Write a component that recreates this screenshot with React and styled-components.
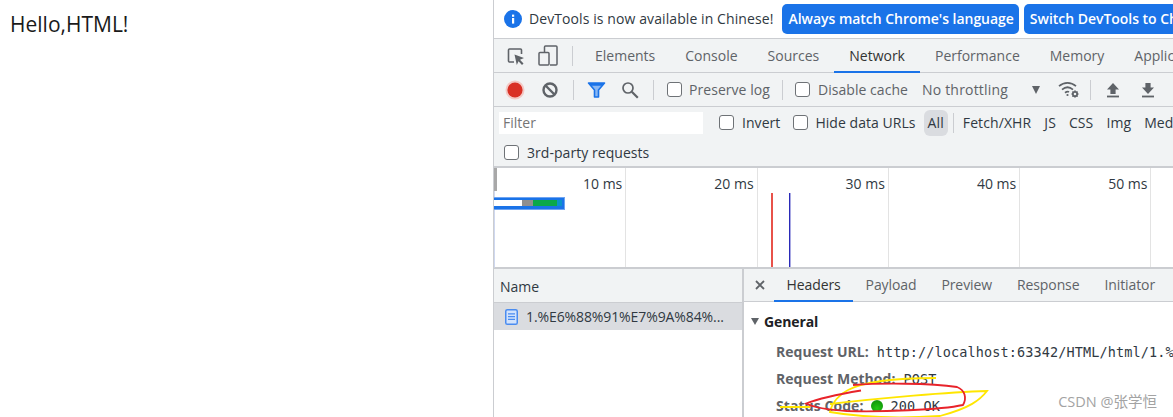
import React from "react";
import styled, { createGlobalStyle } from "styled-components";

const GlobalStyle = createGlobalStyle`
  html, body {
    margin: 0;
    padding: 0;
    background: #fff;
    overflow: hidden;
  }
  * {
    box-sizing: border-box;
  }
`;

const Page = styled.div`
  position: relative;
  display: flex;
  width: 1173px;
  height: 417px;
  overflow: hidden;
  font-family: "Open Sans", "Noto Sans", sans-serif;
`;

const Viewport = styled.div`
  width: 493px;
  flex: none;
  padding: 11px 10px;
  font-size: 21px;
  line-height: 26px;
  color: #1a1a1a;
`;

const Devtools = styled.div`
  width: 680px;
  flex: none;
  display: flex;
  flex-direction: column;
  border-left: 1px solid #cbcdd1;
  background: #f1f3f4;
  color: #5f6368;
  font-size: 14px;
  overflow: hidden;
  white-space: nowrap;
`;

const InfoBar = styled.div`
  height: 39px;
  flex: none;
  display: flex;
  align-items: center;
  gap: 5px;
  padding: 0 0 1px 10px;
  background: #fff;
  border-bottom: 1px solid #cbcdd1;
  color: #303942;
  font-size: 14px;

  svg {
    flex: none;
  }
`;

const InfoText = styled.span`
  flex: none;
  margin: 0 4px 0 2px;
  letter-spacing: 0.09px;
`;

const BlueButton = styled.div`
  height: 30px;
  flex: none;
  display: flex;
  align-items: center;
  padding: 0 5px 0 6px;
  border-radius: 5px;
  background: #1a73e8;
  color: #fff;
  font-size: 14px;
  font-weight: 600;
  letter-spacing: -0.03px;
`;

const TabsRow = styled.div`
  height: 34px;
  flex: none;
  display: flex;
  align-items: stretch;
  padding-left: 12px;
  border-bottom: 1px solid #cbcdd1;
`;

const IconSlot = styled.div`
  width: ${(p) => p.$w || 26}px;
  flex: none;
  display: flex;
  align-items: center;
  justify-content: center;
  margin-left: ${(p) => p.$ml || 0}px;
`;

const Divider = styled.div`
  width: 1px;
  height: ${(p) => p.$h || 20}px;
  flex: none;
  align-self: center;
  margin: ${(p) => p.$m || "0 7px"};
  background: #cbcdd1;
`;

const Tab = styled.div`
  display: flex;
  align-items: center;
  flex: none;
  padding: 0 15px;
  margin-bottom: -1px;
  color: ${(p) => (p.$active ? "#333" : "#5f6368")};
  border-bottom: 2px solid ${(p) => (p.$active ? "#1a73e8" : "transparent")};
`;

const Toolbar = styled.div`
  height: 34px;
  flex: none;
  display: flex;
  align-items: center;
  padding-left: 8px;
  border-bottom: 1px solid #cbcdd1;
`;

const CheckLabel = styled.label`
  display: flex;
  align-items: center;
  flex: none;
  gap: ${(p) => p.$gap || 7}px;
  margin: ${(p) => p.$m || 0};
  color: ${(p) => p.$color || "#5f6368"};
  letter-spacing: 0.05px;
`;

const Box = styled.span`
  width: 15px;
  height: 15px;
  flex: none;
  background: #fff;
  border: 1px solid #6e7276;
  border-radius: 3px;
`;

const Throttle = styled.div`
  width: 130px;
  flex: none;
  display: flex;
  align-items: center;
  justify-content: space-between;
  margin-left: 14px;
  padding-right: 12px;
  letter-spacing: 0.2px;
`;

const Arrow = styled.span`
  width: 0;
  height: 0;
  border-left: 4.5px solid transparent;
  border-right: 4.5px solid transparent;
  border-top: 8px solid #5f6368;
`;

const FilterPanel = styled.div`
  height: 61px;
  flex: none;
  display: flex;
  flex-direction: column;
  border-bottom: 2px solid #cbcdd1;
`;

const FilterRow = styled.div`
  height: ${(p) => p.$h}px;
  display: flex;
  align-items: center;
  padding-left: ${(p) => p.$pad}px;
`;

const FilterInput = styled.div`
  width: 204px;
  height: 22px;
  flex: none;
  padding-left: 4px;
  background: #fff;
  color: #757575;
  line-height: 22px;
  margin-right: 16px;
`;

const TypeFilter = styled.div`
  flex: none;
  padding: 0 4px;
  margin-right: ${(p) => p.$mr ?? 5}px;
  height: 26px;
  line-height: 26px;
  border-radius: 6px;
  color: #303942;
  letter-spacing: 0.1px;
  background: ${(p) => (p.$active ? "#dadce0" : "transparent")};
`;

const Overview = styled.div`
  position: relative;
  height: 100px;
  flex: none;
  display: flex;
  background: #fff;
  border-left: 1px solid #cfd8f0;
  border-bottom: 1px solid #cbcdd1;
`;

const RulerCell = styled.div`
  width: 131.3px;
  flex: none;
  padding: 6px 3px 0 0;
  text-align: right;
  color: #303942;
  border-right: 1px solid #e3e3e3;
`;

const ChartMarks = styled.svg`
  position: absolute;
  left: -1px;
  top: 0;
`;

const Split = styled.div`
  flex: 1;
  display: flex;
  min-height: 0;
  border-top: 1px solid #cbcdd1;
  background: #fff;
`;

const NamePane = styled.div`
  width: 250px;
  flex: none;
  border-right: 2px solid #cbcdd1;
`;

const NameHeader = styled.div`
  height: 34px;
  padding-left: 6px;
  line-height: 35px;
  background: #f1f3f4;
  color: #303942;
  border-bottom: 1px solid #cbcdd1;
`;

const NameRow = styled.div`
  height: 27px;
  display: flex;
  align-items: center;
  gap: 8px;
  padding-left: 11px;
  background: #dadce0;
  color: #303942;
  letter-spacing: -0.1px;
`;

const DetailPane = styled.div`
  flex: 1;
  min-width: 0;
  display: flex;
  flex-direction: column;
`;

const DetailTabs = styled.div`
  height: 33px;
  flex: none;
  display: flex;
  align-items: stretch;
  background: #f1f3f4;
  border-bottom: 1px solid #cbcdd1;
`;

const CloseSlot = styled.div`
  width: 30px;
  flex: none;
  display: flex;
  align-items: center;
  justify-content: center;
  padding-left: 2px;
`;

const DetailTab = styled(Tab)`
  padding: 0 12.5px;
  letter-spacing: -0.1px;
`;

const Section = styled.div`
  padding: 8px 0 0 7px;
  background: #fff;
`;

const SectionTitle = styled.div`
  display: flex;
  align-items: center;
  gap: 5px;
  height: 22px;
  font-weight: 700;
  color: #202124;
  letter-spacing: -0.1px;
  margin-bottom: 6px;
`;

const TitleArrow = styled.span`
  width: 0;
  height: 0;
  border-left: 4.5px solid transparent;
  border-right: 4.5px solid transparent;
  border-top: 7px solid #5f6368;
`;

const HeaderRow = styled.div`
  display: flex;
  align-items: center;
  height: 27px;
  padding-left: 25px;
`;

const HeaderKey = styled.span`
  flex: none;
  font-weight: 700;
  color: #5f6368;
  letter-spacing: 0.05px;
  margin-right: 8px;
`;

const HeaderValue = styled.span`
  font-family: "DejaVu Sans Mono", "Liberation Mono", monospace;
  font-size: 13.5px;
  letter-spacing: 0.12px;
  color: #303942;
`;

const StatusDot = styled.span`
  width: 12px;
  height: 12px;
  flex: none;
  margin-right: 7px;
  border-radius: 50%;
  background: radial-gradient(circle at 50% 70%, #23c814 0%, #129a0a 70%, #5f8f55 100%);
`;

const Scribbles = styled.svg`
  position: absolute;
  left: 780px;
  top: 340px;
  pointer-events: none;
`;

const Watermark = styled.div`
  position: absolute;
  right: 16px;
  bottom: 6px;
  font-family: "Open Sans", "Noto Sans CJK SC", sans-serif;
  font-size: 14.5px;
  color: #a3a3a3;
`;

const InspectIcon = () => (
  <svg width="20" height="20" viewBox="0 0 20 20" fill="none">
    <path d="M8 16H3.5a1 1 0 0 1-1-1V4a1 1 0 0 1 1-1h11a1 1 0 0 1 1 1v4" stroke="#5f6368" strokeWidth="1.6" />
    <path d="M8.5 8.5l9.5 3.6-4 1.7 3.5 3.7-1.5 1.4-3.5-3.7-1.7 3.8z" fill="#5f6368" />
  </svg>
);

const DeviceIcon = () => (
  <svg width="20" height="22" viewBox="0 0 20 22" fill="none" stroke="#5f6368" strokeWidth="1.5">
    <path d="M6.5 7V2a1 1 0 0 1 1-1h10.5a1 1 0 0 1 1 1v17a1 1 0 0 1-1 1h-6" />
    <rect x="1" y="7.5" width="10" height="12.5" rx="1" />
  </svg>
);

const InfoIcon = () => (
  <svg width="18" height="18" viewBox="0 0 18 18">
    <circle cx="9" cy="9" r="9" fill="#1a73e8" />
    <rect x="8" y="8" width="2.2" height="5.6" fill="#fff" />
    <rect x="8" y="4.6" width="2.2" height="2.2" fill="#fff" />
  </svg>
);

const RecordIcon = () => (
  <svg width="20" height="20" viewBox="0 0 20 20">
    <circle cx="10" cy="10" r="9.5" fill="#f3c9c5" />
    <circle cx="10" cy="10" r="7.6" fill="#d93025" />
  </svg>
);

const ClearIcon = () => (
  <svg width="18" height="18" viewBox="0 0 18 18" fill="none" stroke="#5f6368" strokeWidth="2.4">
    <circle cx="9" cy="9" r="6.5" />
    <path d="M4.5 4.5l9 9" />
  </svg>
);

const FunnelIcon = () => (
  <svg width="19" height="16" viewBox="0 0 18 16">
    <path d="M1 1h16l-6 7v7H7V8z" fill="#8ab8f4" stroke="#1a73e8" strokeWidth="1.6" strokeLinejoin="round" />
    <path d="M1 1h16l-2.4 2.8H3.4z" fill="#1a73e8" />
  </svg>
);

const SearchIcon = () => (
  <svg width="18" height="18" viewBox="0 0 18 18" fill="none" stroke="#5f6368">
    <circle cx="7" cy="7" r="5" strokeWidth="1.7" />
    <path d="M10.8 10.8l6 6" strokeWidth="2.2" />
  </svg>
);

const WifiGearIcon = () => (
  <svg width="22" height="16" viewBox="0 0 22 16" fill="none" stroke="#5f6368" strokeWidth="1.7">
    <path d="M1 4.2C6 -0.2 13 -0.2 18 4.2" />
    <path d="M4 7.6C7.5 4.6 11.5 4.6 15 7.6" />
    <path d="M7 10.8C8.6 9.6 10.4 9.6 11 10" />
    <circle cx="9.5" cy="13" r="1.1" fill="#5f6368" stroke="none" />
    <circle cx="17" cy="12" r="2.2" strokeWidth="1.8" />
    <path d="M17 8.3v1.2M17 14.5v1.2M13.3 12h1.2M19.5 12h1.2M14.5 9.5l.8.8M18.8 13.8l.8.8M19.5 9.5l-.8.8M15.2 13.8l-.8.8" strokeWidth="1.2" />
  </svg>
);

const UploadIcon = () => (
  <svg width="14" height="16" viewBox="0 0 14 16" fill="#5f6368">
    <path d="M7 1l6 6.5H9.6V12H4.4V7.5H1z" />
    <rect x="1" y="13.6" width="12" height="1.8" />
  </svg>
);

const DownloadIcon = () => (
  <svg width="14" height="16" viewBox="0 0 14 16" fill="#5f6368">
    <path d="M7 12L1 5.5h3.4V1h5.2v4.5H13z" />
    <rect x="1" y="13.6" width="12" height="1.8" />
  </svg>
);

const DocIcon = () => (
  <svg width="13" height="16" viewBox="0 0 13 16" fill="none">
    <rect x="0.75" y="0.75" width="11.5" height="14.5" rx="1.6" fill="#d2e3fc" stroke="#4a8cf0" strokeWidth="1.5" />
    <path d="M3 4.8h7M3 7.6h7M3 10.4h7" stroke="#4a8cf0" strokeWidth="1.3" />
  </svg>
);

const CloseIcon = () => (
  <svg width="10" height="10" viewBox="0 0 10 10" stroke="#5f6368" strokeWidth="1.8">
    <path d="M1 1l8 8M9 1l-8 8" />
  </svg>
);

const mainTabs = ["Elements", "Console", "Sources", "Network", "Performance", "Memory", "Application"];
const detailTabs = ["Headers", "Payload", "Preview", "Response", "Initiator"];
const typeFilters = ["Fetch/XHR", "JS", "CSS", "Img", "Media"];
const rulerTicks = ["10 ms", "20 ms", "30 ms", "40 ms", "50 ms", "60 ms"];

export default function App() {
  return (
    <Page>
      <GlobalStyle />
      <Viewport>Hello,HTML!</Viewport>
      <Devtools>
        <InfoBar>
          <InfoIcon />
          <InfoText>DevTools is now available in Chinese!</InfoText>
          <BlueButton>Always match Chrome's language</BlueButton>
          <BlueButton>Switch DevTools to Chinese</BlueButton>
        </InfoBar>

        <TabsRow>
          <IconSlot $w={20}><InspectIcon /></IconSlot>
          <IconSlot $w={44}><DeviceIcon /></IconSlot>
          <Divider $m="0 7px 0 2px" />
          {mainTabs.map((t) => (
            <Tab key={t} $active={t === "Network"}>{t}</Tab>
          ))}
        </TabsRow>

        <Toolbar>
          <IconSlot $w={26}><RecordIcon /></IconSlot>
          <IconSlot $w={43}><ClearIcon /></IconSlot>
          <Divider $m="0 9px 0 2px" />
          <IconSlot $w={26}><FunnelIcon /></IconSlot>
          <IconSlot $w={42}><SearchIcon /></IconSlot>
          <Divider $m="0 13px 0 2px" />
          <CheckLabel>
            <Box />
            Preserve log
          </CheckLabel>
          <Divider $m="0 12px" />
          <CheckLabel $gap={8}>
            <Box />
            Disable cache
          </CheckLabel>
          <Throttle>
            No throttling
            <Arrow />
          </Throttle>
          <IconSlot $w={34}><WifiGearIcon /></IconSlot>
          <Divider $m="0 14px 0 4px" />
          <IconSlot $w={16}><UploadIcon /></IconSlot>
          <IconSlot $w={16} $ml={19}><DownloadIcon /></IconSlot>
        </Toolbar>

        <FilterPanel>
          <FilterRow $h={31} $pad={5}>
            <FilterInput>Filter</FilterInput>
            <CheckLabel $color="#303942" $gap={8} $m="0 13px 0 0">
              <Box />
              Invert
            </CheckLabel>
            <CheckLabel $color="#303942" $m="0 8px 0 0">
              <Box />
              Hide data URLs
            </CheckLabel>
            <TypeFilter $active $mr={3}>All</TypeFilter>
            <Divider $m="0 5px 0 2px" />
            {typeFilters.map((t) => (
              <TypeFilter key={t}>{t}</TypeFilter>
            ))}
          </FilterRow>
          <FilterRow $h={28} $pad={10}>
            <CheckLabel $color="#303942" $gap={8}>
              <Box />
              3rd-party requests
            </CheckLabel>
          </FilterRow>
        </FilterPanel>

        <Overview>
          {rulerTicks.map((t) => (
            <RulerCell key={t}>{t}</RulerCell>
          ))}
          <ChartMarks width="300" height="99" viewBox="0 0 300 99">
            <rect x="0" y="0" width="3" height="23" fill="#a8a8a8" />
            <rect x="0" y="29" width="71" height="13" fill="#6ea4f2" />
            <rect x="0" y="30" width="70" height="11" fill="#1a73e8" />
            <rect x="0" y="32" width="28" height="6" fill="#fff" />
            <rect x="28" y="32" width="11" height="6" fill="#8f8f8f" />
            <rect x="39" y="32" width="24" height="6" fill="#0ba84a" />
            <rect x="63" y="32" width="5" height="6" fill="#0a93c9" />
            <rect x="277" y="25" width="2" height="74" fill="#e8524a" />
            <rect x="295" y="25" width="1.4" height="74" fill="#2a2ab8" />
          </ChartMarks>
        </Overview>

        <Split>
          <NamePane>
            <NameHeader>Name</NameHeader>
            <NameRow>
              <DocIcon />
              1.%E6%88%91%E7%9A%84%...
            </NameRow>
          </NamePane>
          <DetailPane>
            <DetailTabs>
              <CloseSlot><CloseIcon /></CloseSlot>
              {detailTabs.map((t) => (
                <DetailTab key={t} $active={t === "Headers"}>{t}</DetailTab>
              ))}
            </DetailTabs>
            <Section>
              <SectionTitle>
                <TitleArrow />
                General
              </SectionTitle>
              <HeaderRow>
                <HeaderKey>Request URL:</HeaderKey>
                <HeaderValue>http://localhost:63342/HTML/html/1.%E6%88%91</HeaderValue>
              </HeaderRow>
              <HeaderRow>
                <HeaderKey>Request Method:</HeaderKey>
                <HeaderValue>POST</HeaderValue>
              </HeaderRow>
              <HeaderRow>
                <HeaderKey>Status Code:</HeaderKey>
                <StatusDot />
                <HeaderValue>200 OK</HeaderValue>
              </HeaderRow>
            </Section>
          </DetailPane>
        </Split>
      </Devtools>

      <Scribbles width="393" height="77" viewBox="0 0 393 77" fill="none">
        <path d="M0 67H30M50 64C100 58 170 52 207 51C200 60 190 68 160 76C130 78 90 79 50 72C52 62 60 54 68 50C85 41 120 38 156 38" stroke="#ffe600" strokeWidth="1.8" />
        <path d="M81 50.5C60 54 40 58 26 63.5C35 68 50 70 67 71C100 72 160 70 183 65C187 58 185 50 177 47C150 43 100 43 73 45" stroke="#e8232a" strokeWidth="1.8" />
      </Scribbles>
      <Watermark>CSDN @张学恒</Watermark>
    </Page>
  );
}
